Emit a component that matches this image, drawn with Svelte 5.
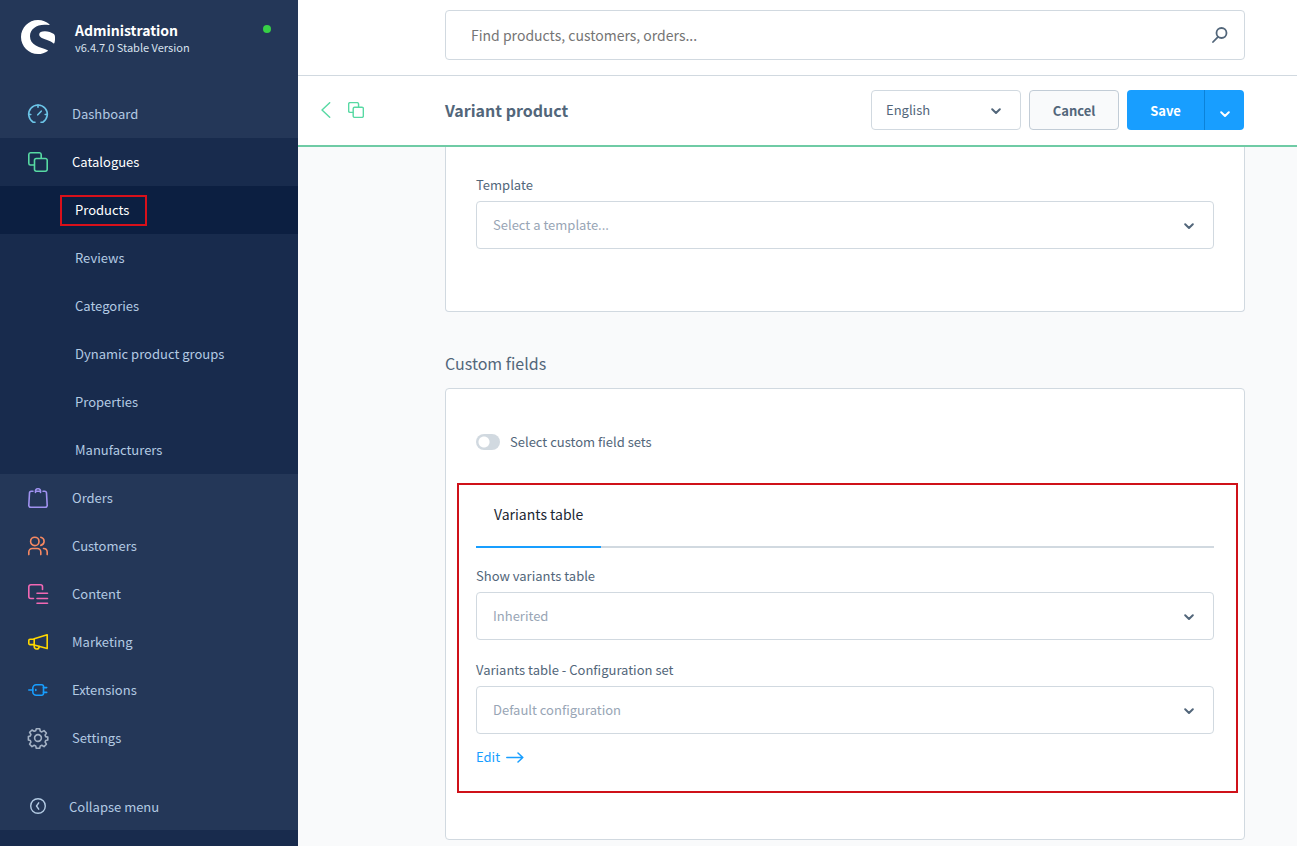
<script>
    let language = "English";
    let template = "Select a template...";
    let showTable = "Inherited";
    let configuration = "Default configuration";
    let search = "";
    let customSets = false;

    const subItems = [
        "Products",
        "Reviews",
        "Categories",
        "Dynamic product groups",
        "Properties",
        "Manufacturers",
    ];

    const menu = [
        {
            label: "Dashboard",
            color: "#6cc5e8",
            paths: [
                "M7 18.200H5.200A9.300 9.300 0 1 1 14.800 18.200H13",
                "M9.800 10.800 13.200 7.200M10 1v2.200M.8 10.500H2.800M17.200 10.500h2",
            ],
        },
        {
            label: "Catalogues",
            color: "#57d9a3",
            children: subItems,
            paths: [
                "M6 13H2.500A1.800 1.800 0 0 1 .8 11.200V2.500A1.800 1.800 0 0 1 2.500.8h9A1.800 1.800 0 0 1 13.200 2.500V6",
                "M8.300 6.500h9a1.800 1.800 0 0 1 1.900 1.800v9a1.800 1.800 0 0 1-1.900 1.900h-9a1.800 1.800 0 0 1-1.800-1.900v-9a1.800 1.800 0 0 1 1.800-1.800z",
            ],
        },
        {
            label: "Orders",
            color: "#a092f0",
            paths: [
                "M5 3.200H3.300A1.800 1.800 0 0 0 1.500 5L.8 17.200a1.800 1.800 0 0 0 1.800 2h14.800a1.800 1.800 0 0 0 1.800-2L18.500 5a1.800 1.800 0 0 0-1.800-1.800H15",
                "M7.500 4.500V3A2 2 0 0 1 9.500.8h1A2 2 0 0 1 12.500 3v1.500M7.500 3.200h5",
            ],
        },
        {
            label: "Customers",
            color: "#f88962",
            paths: [
                "M6.800 1.200a4.200 4.200 0 1 1 0 8.400 4.200 4.200 0 0 1 0-8.400z",
                "M.8 18.600V16a3.500 3.500 0 0 1 3.500-3.500h5A3.500 3.500 0 0 1 12.800 16v2.600",
                "M12.800 1.200a4.200 4.200 0 0 1 0 8.200M15.500 12.500a3.700 3.700 0 0 1 3.700 3.500v2.600",
            ],
        },
        {
            label: "Content",
            color: "#f268b4",
            paths: [
                "M5.500 14.500H2.800a2 2 0 0 1-2-2V2.800a2 2 0 0 1 2-2h9.700a2 2 0 0 1 2 2V5.500",
                "M9 9.200h10.500M9 14.500h10.500M9 19.200h10.500",
            ],
        },
        {
            label: "Marketing",
            color: "#ffd700",
            paths: [
                "M6.200 6.700 19.200 2.700v13.900L6.200 13z",
                "M6.200 7.200H2a1.200 1.200 0 0 0-1.200 1.200v3A1.200 1.200 0 0 0 2 12.600h4.200M6.200 13v1.200c0 3.600 4.800 3.600 5 .4",
            ],
        },
        {
            label: "Extensions",
            color: "#189eff",
            paths: [
                "M.8 10h4M15.500 7.600h3.200M15.500 12.400h3.200",
                "M8.300 4.800h5.400a1.800 1.800 0 0 1 1.800 1.800v6.800a1.800 1.800 0 0 1-1.800 1.800H8.300a3.500 3.500 0 0 1-3.500-3.500V8.300a3.500 3.500 0 0 1 3.500-3.500zM7.800 9.600v.8",
            ],
        },
        {
            label: "Settings",
            color: "#a3b1c4",
            paths: [
                "M8.300.8h3.400l.6 2.500 1.500.6 2.200-1.300L18.400 5l-1.300 2.200.6 1.400 2.100.5v2.800l-2.100.6-.6 1.500 1.300 2.200-2.400 2.400-2.200-1.300-1.500.6-.6 2.300H8.300l-.6-2.300-1.500-.6L4 18.600l-2.400-2.400L2.900 14l-.6-1.500L.4 11.900V8.600L2.300 8l.6-1.500-1.300-2.200L4 2l2.200 1.300 1.500-.6z",
                "M10 6.600a3.400 3.400 0 1 1 0 6.800 3.400 3.400 0 0 1 0-6.800z",
            ],
        },
    ];
</script>

{#snippet chevron()}
    <svg class="chevron" viewBox="0 0 10 7" aria-hidden="true">
        <path d="M1.200 1.300 5 5l3.800-3.700" />
    </svg>
{/snippet}

<div class="admin">
    <aside class="sidebar">
        <header class="brand">
            <svg class="logo" viewBox="0 0 34 34" aria-hidden="true">
                <path
                    d="M28.400 4.300C25.500 1.600 21.500 0 17 0 7.600 0 0 7.600 0 17s7.600 17 17 17c3.600 0 7-1.100 9.800-3.100.2-.2.200-.5-.1-.6-3.700-1.900-7.900-2.300-11.900-4.700C11.200 23.400 9 20.300 9 16.200 9 9.400 15.200 4.800 23.500 4.800c1.600 0 3.200.1 4.600.3.400 0 .6-.5.300-.8z"
                />
                <path
                    d="M32.900 14.100c-2.400-1.900-5.700-2.900-9-2.900-3.500 0-5.700 1-5.700 3.200 0 2.800 3.500 3.900 7.200 5.300 2.600 1 5.200 2.100 7.200 3.700.3.200.7.100.8-.3.600-1.900.8-4.300.5-7.100-.1-.7-.4-1.400-1-1.900z"
                />
            </svg>
            <div class="brand-text">
                <strong>Administration</strong>
                <span>v6.4.7.0 Stable Version</span>
            </div>
            <i class="status"></i>
        </header>

        <nav>
            {#each menu as item}
                <a href="#{item.label}" class:open={item.children}>
                    <svg
                        class="menu-icon"
                        viewBox="0 0 20 20"
                        stroke={item.color}
                        aria-hidden="true"
                    >
                        {#each item.paths as d}
                            <path {d} />
                        {/each}
                    </svg>
                    {item.label}
                </a>
                {#if item.children}
                    <div class="submenu">
                        {#each item.children as child, i}
                            <a href="#{child}" class:active={i === 0}>
                                <span>{child}</span>
                            </a>
                        {/each}
                    </div>
                {/if}
            {/each}
        </nav>

        <button class="collapse">
            <svg viewBox="0 0 16 16" aria-hidden="true">
                <circle cx="8" cy="8" r="7.300" />
                <path d="M8.700 4.800 6.500 8l2.200 3.200" />
            </svg>
            Collapse menu
        </button>
        <div class="user-bar"></div>
    </aside>

    <main>
        <div class="search-row">
            <label class="search">
                <input
                    type="text"
                    aria-label="Search"
                    placeholder="Find products, customers, orders..."
                    bind:value={search}
                />
                <svg viewBox="0 0 16 16" aria-hidden="true">
                    <circle cx="9.500" cy="6" r="5" />
                    <path d="M6 9.800 1 15" />
                </svg>
            </label>
        </div>

        <div class="toolbar">
            <div class="back">
                <a href="#back" aria-label="Back">
                    <svg class="arrow-left" viewBox="0 0 10 16">
                        <path d="M8.700.7 1 8l7.700 7.300" />
                    </svg>
                </a>
                <svg class="copies" viewBox="0 0 20 20" aria-hidden="true">
                    {#each menu[1].paths as d}
                        <path {d} />
                    {/each}
                </svg>
            </div>
            <h1>Variant product</h1>
            <div class="select language">
                <select aria-label="Language" bind:value={language}>
                    <option>English</option>
                </select>
                {@render chevron()}
            </div>
            <button class="cancel">Cancel</button>
            <div class="save-group">
                <button class="save">Save</button>
                <button class="save-more" aria-label="More save options">
                    {@render chevron()}
                </button>
            </div>
        </div>

        <div class="content">
            <section class="card first">
                <label for="template">Template</label>
                <div class="select">
                    <select id="template" bind:value={template}>
                        <option>Select a template...</option>
                    </select>
                    {@render chevron()}
                </div>
            </section>

            <h2>Custom fields</h2>
            <section class="card fields">
                <label class="switch">
                    <input type="checkbox" bind:checked={customSets} />
                    Select custom field sets
                </label>

                <div class="marked">
                    <div class="tabs">
                        <button>Variants table</button>
                    </div>
                    <label for="show-table">Show variants table</label>
                    <div class="select">
                        <select id="show-table" bind:value={showTable}>
                            <option>Inherited</option>
                        </select>
                        {@render chevron()}
                    </div>
                    <label class="next" for="configuration">
                        Variants table - Configuration set
                    </label>
                    <div class="select">
                        <select id="configuration" bind:value={configuration}>
                            <option>Default configuration</option>
                        </select>
                        {@render chevron()}
                    </div>
                    <a class="edit" href="#edit">
                        Edit
                        <svg viewBox="0 0 18 12" aria-hidden="true">
                            <path d="M.8 6.500h16M12 2 16.800 6.500 12 11" />
                        </svg>
                    </a>
                </div>
            </section>
        </div>
    </main>
</div>

<style>
    :global(body) {
        background: #f9fafb;
    }

    .admin,
    .admin button,
    .admin input,
    .admin select {
        font-family: "Noto Sans CJK SC", "Noto Sans", sans-serif;
        font-size: 13px;
    }

    .admin * {
        box-sizing: border-box;
    }

    .admin {
        display: grid;
        grid-template-columns: 298px 1fr;
        min-height: 100vh;
        color: #52667a;
        line-height: 16px;
    }

    svg {
        flex: none;
        fill: none;
        stroke-linecap: round;
        stroke-linejoin: round;
    }

    a {
        text-decoration: none;
    }

    button {
        cursor: pointer;
    }

    /* Sidebar */
    .sidebar {
        display: flex;
        flex-direction: column;
        background: #243758;
        color: #b3cae3;
    }

    .brand {
        display: flex;
        align-items: flex-start;
        height: 90px;
        padding: 20px 27px 0 21px;
    }

    .logo {
        width: 34px;
        height: 34px;
        fill: #fff;
    }

    .brand-text {
        flex: 1;
        display: flex;
        flex-direction: column;
        padding-left: 20px;
    }

    .brand-text strong {
        color: #fff;
        font-size: 14px;
        line-height: 20px;
    }

    .brand-text span {
        font-size: 11px;
        line-height: 14px;
        color: #d8e2ee;
    }

    .status {
        width: 8px;
        height: 8px;
        margin-top: 5px;
        border-radius: 50%;
        background: #37d046;
    }

    nav a {
        display: flex;
        align-items: center;
        height: 48px;
        padding-left: 28px;
        color: inherit;
    }

    .menu-icon {
        width: 20px;
        height: 20px;
        margin-right: 24px;
        stroke-width: 1.6;
        overflow: visible;
    }

    nav a.open {
        background: #182b4d;
        color: #fff;
    }

    .submenu {
        background: #182b4d;
    }

    .submenu a {
        padding-left: 75px;
    }

    .submenu a.active {
        padding-left: 60px;
        background: #0c1f41;
        color: #fff;
    }

    .active span {
        padding: 5px 16px 6px 13px;
        border: 2px solid #d9101a;
    }

    .collapse {
        display: flex;
        align-items: center;
        gap: 23px;
        height: 48px;
        margin-top: 20px;
        padding: 0 0 0 30px;
        border: 0;
        background: none;
        color: inherit;
    }

    .collapse svg {
        width: 16px;
        height: 16px;
        stroke: #b3cae3;
        stroke-width: 1.4;
    }

    .user-bar {
        flex: 1;
        min-height: 16px;
        background: #182b4d;
    }

    /* Search and toolbar */
    main {
        min-width: 0;
    }

    .search-row {
        padding: 10px 52px 15px 147px;
        border-bottom: 1px solid #d1d9e0;
        background: #fff;
    }

    .search {
        display: flex;
        align-items: center;
        height: 50px;
        padding: 0 16px 0 25px;
        border: 1px solid #d1d9e0;
        border-radius: 4px;
    }

    .search input {
        flex: 1;
        padding: 0;
        border: 0;
        outline: 0;
        background: none;
        font-size: 14px;
        color: #52667a;
    }

    .search input::placeholder {
        color: #757575;
    }

    .search svg {
        width: 16px;
        height: 16px;
        stroke: #52667a;
        stroke-width: 1.8;
    }

    .toolbar {
        display: flex;
        align-items: center;
        gap: 8px;
        height: 71px;
        padding: 0 53px 1px 0;
        border-bottom: 2px solid #6fcba5;
        background: #fff;
    }

    .back {
        display: flex;
        align-items: center;
        gap: 17px;
        width: 139px;
        padding-left: 23px;
        stroke: #57d9a3;
    }

    .back a {
        display: flex;
    }

    .arrow-left {
        width: 10px;
        height: 16px;
        stroke-width: 1.4;
    }

    .copies {
        width: 16px;
        height: 16px;
        stroke-width: 1.8;
    }

    h1 {
        flex: 1;
        margin: 0;
        font-size: 16px;
        font-weight: 700;
    }

    .select {
        position: relative;
    }

    select {
        width: 100%;
        height: 48px;
        padding: 0 16px 2px;
        border: 1px solid #d1d9e0;
        border-radius: 4px;
        appearance: none;
        background: #fff;
        color: #98a5b5;
    }

    .chevron {
        width: 10px;
        height: 7px;
        stroke: #52667a;
        stroke-width: 2;
    }

    .select .chevron {
        position: absolute;
        top: 50%;
        right: 20px;
        margin-top: -2px;
        pointer-events: none;
    }

    .language {
        width: 150px;
    }

    .language select {
        height: 40px;
        padding: 0 14px 1px;
        color: #52667a;
    }

    .cancel {
        width: 90px;
        height: 40px;
        border: 1px solid #c2ccd6;
        border-radius: 4px;
        background: #f9fafb;
        color: #52667a;
        font-weight: 700;
    }

    .save-group {
        display: flex;
        height: 40px;
    }

    .save-group button {
        border: 0;
        background: #189eff;
        color: #fff;
        font-weight: 700;
    }

    .save-group .save {
        width: 77px;
        border-radius: 4px 0 0 4px;
    }

    .save-group .save-more {
        width: 40px;
        padding: 4px 0 0;
        border-left: 1px solid #0b82d9;
        border-radius: 0 4px 4px 0;
    }

    .save-more .chevron {
        stroke: #fff;
    }

    /* Cards */
    .content {
        padding: 0 52px 6px 147px;
    }

    .card {
        border: 1px solid #d1d9e0;
        border-radius: 4px;
        background: #fff;
    }

    .card label {
        display: block;
        margin-bottom: 8px;
    }

    .card.first {
        padding: 30px 30px 62px;
        border-top: 0;
        border-radius: 0 0 4px 4px;
    }

    h2 {
        margin: 39px 0 13px;
        font-size: 16px;
        font-weight: 400;
        line-height: 24px;
    }

    .card.fields {
        padding: 45px 30px 46px;
    }

    .card .switch {
        display: flex;
        align-items: center;
        gap: 10px;
        margin-bottom: 33px;
    }

    .switch input {
        width: 24px;
        height: 16px;
        margin: 0;
        border-radius: 8px;
        appearance: none;
        background: radial-gradient(circle at 8px 8px, #fff 5px, #d1d9e0 6px);
    }

    .switch input:checked {
        background: radial-gradient(circle at 16px 8px, #fff 5px, #189eff 6px);
    }

    .marked {
        margin: 0 -24px 0 -19px;
        padding: 0 22px 25px 17px;
        border: 2px solid #cf1119;
    }

    .tabs {
        display: flex;
        height: 63px;
        margin-bottom: 20px;
        box-shadow: inset 0 -2px #d1d9e0;
    }

    .tabs button {
        padding: 0 18px 4px;
        border: 0;
        border-bottom: 2px solid #189eff;
        background: none;
        color: #1c2733;
        font-size: 14px;
    }

    .card .next {
        margin-top: 22px;
    }

    .edit {
        display: inline-flex;
        align-items: center;
        gap: 6px;
        margin-top: 15px;
        margin-bottom: 1px;
        color: #189eff;
    }

    .edit svg {
        width: 18px;
        height: 12px;
        stroke: #189eff;
        stroke-width: 1.5;
    }
</style>
